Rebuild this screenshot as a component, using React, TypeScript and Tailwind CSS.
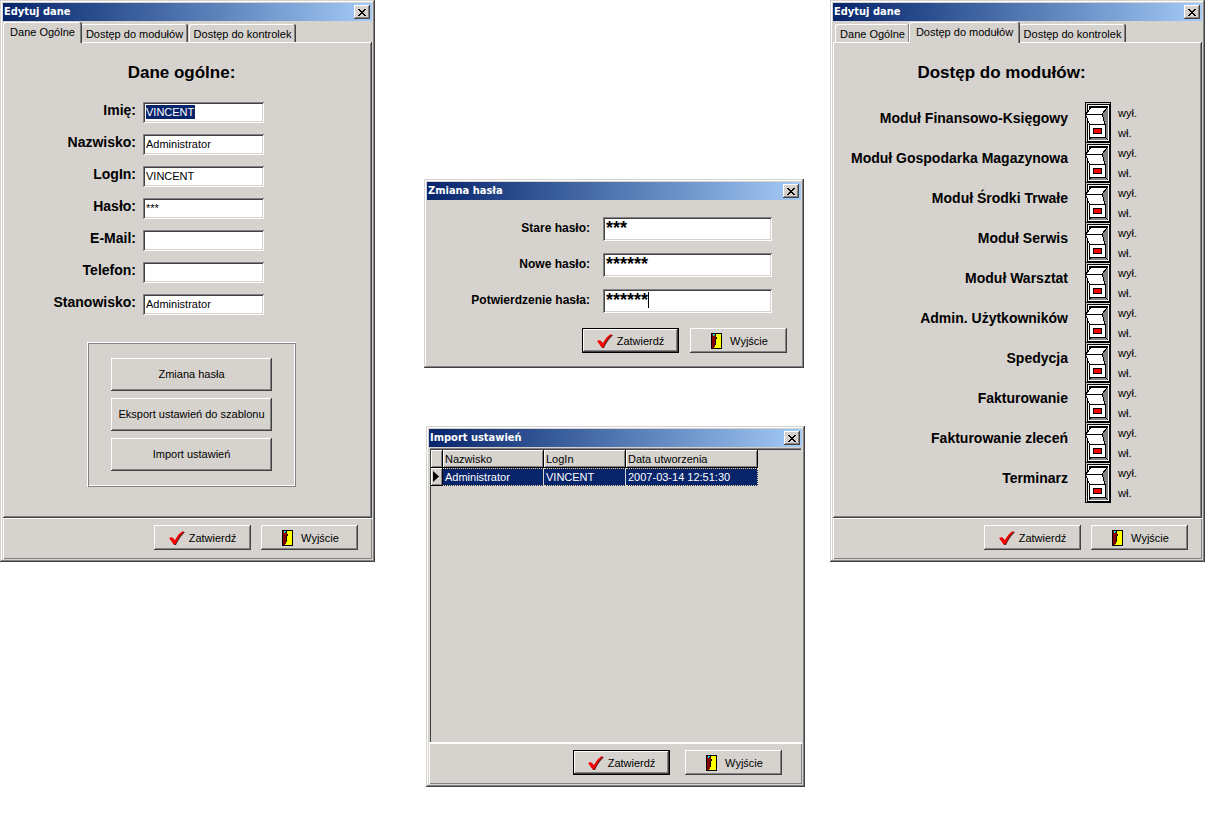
import { useState } from "react"
import type { ReactNode } from "react"
import { clsx } from "clsx"

const sunken =
    "shadow-[inset_1px_1px_#848284,inset_-1px_-1px_#fff,inset_2px_2px_#424142,inset_-2px_-2px_#d6d3ce]"
const raised = "shadow-[inset_-1px_-1px_#424142,inset_1px_1px_#fff,inset_-2px_-2px_#848284]"
const frame =
    "shadow-[inset_-1px_-1px_#424142,inset_1px_1px_#d6d3ce,inset_-2px_-2px_#848284,inset_2px_2px_#fff]"

const CheckIcon = () => (
    <svg width="16" height="14" viewBox="0 0 16 14" aria-hidden="true">
        <path d="M1 7.5 4 7l2.5 3L10 4l3.500-3H16L12 5.500 9 10l-2 4H5z" fill="#6b2020" />
        <path d="M0 7 3 6l2.500 3.500L9.500 3.500 13 .5 15 0 10.500 5 8 9.500 6.500 13H4.500z" fill="#f00" />
    </svg>
)

const DoorIcon = () => (
    <svg width="11" height="16" viewBox="0 0 11 16" shapeRendering="crispEdges" aria-hidden="true">
        <path d="M0 0h11v16H0z" fill="#000" />
        <path d="M1 1h9v14H1z" fill="#ff0" />
        <path d="M1 1h3v2h1v9H4v2H3v1H1z" fill="#840000" />
        <path d="M2 1h2v1H3v1H2z" fill="#0ff" />
        <path d="M4 1h1v2H4zM5 4h1v2H5zM4 6h1v6H4z" fill="#000" />
    </svg>
)

const SwitchIcon = () => (
    <svg width="26" height="41" viewBox="0 0 26 41" shapeRendering="crispEdges" aria-hidden="true">
        <path d="M0 0h26v41H0z" fill="#000" />
        <path d="M1 1h24v39H1z" fill="#d6d3ce" />
        <path d="M2 2h23v38H2z" fill="#000" />
        <path d="M3 3h21v36H3z" fill="#fff" />
        <path d="M4 4h19v34H4z" fill="#000" />
        <path d="M22 6 17 12l3 10v13l3 3V6zM5 38l1-2h14l2 2z" fill="#848284" />
        <path d="M5 6h17l-5 6 3 10v13H5V22L1 12z" fill="#fff" />
        <path d="M5.500 6.500.500 12.500l4 10v13M.500 12.500h17M22 6l-5 6 3 10v13M4.500 22.500h16M4.500 35.500h16" fill="none" stroke="#000" />
        <path d="M8 26h9v6H8z" fill="#000" />
        <path d="M9 27h7v4H9z" fill="#f00" />
    </svg>
)

type WindowProps = { title: string; className?: string; children: ReactNode }

const Window = ({ title, className, children }: WindowProps) => (
    <section className={clsx("flex flex-col bg-[#d6d3ce] p-[3px]", frame, className)}>
        <header className="flex h-[18px] items-center justify-between bg-linear-to-r from-[#08246b] to-[#a5cbf7] pr-[2px] pl-px">
            <h2 className="font-['DejaVu_Sans_Condensed',sans-serif] text-[11px] leading-[14px] font-bold text-white">
                {title}
            </h2>
            <button
                aria-label="Zamknij"
                className={clsx("flex h-[14px] w-4 items-center justify-center bg-[#d6d3ce]", raised)}
            >
                <svg width="8" height="7" viewBox="0 0 8 7" shapeRendering="crispEdges" aria-hidden="true">
                    <path
                        d="M0 0h2v1h1v1h2V1h1V0h2v1H7v1H6v1H5v1h1v1h1v1h1v1H6V6H5V5H3v1H2v1H0V6h1V5h1V4h1V3H2V2H1V1H0z"
                        fill="#000"
                    />
                </svg>
            </button>
        </header>
        {children}
    </section>
)

const Actions = ({ primary, className }: { primary?: boolean; className?: string }) => (
    <div className={clsx("flex justify-end", className)}>
        <button
            className={clsx(
                "flex h-[25px] w-[97px] items-center justify-center gap-1",
                raised,
                primary && "border border-black"
            )}
        >
            <CheckIcon />
            Zatwierdź
        </button>
        <button className={clsx("flex h-[25px] w-[97px] items-center justify-center gap-2 pl-[2px]", raised)}>
            <DoorIcon />
            Wyjście
        </button>
    </div>
)

const tabs = [
    { name: "Dane Ogólne", width: "w-[75px]", active: "w-[79px]" },
    { name: "Dostęp do modułów", width: "w-[107px]", active: "w-[111px]" },
    { name: "Dostęp do kontrolek", width: "w-[107px]", active: "w-[111px]" },
]

const EditWindow = ({ tab, children }: { tab: number; children: ReactNode }) => (
    <Window title="Edytuj dane">
        <div role="tablist" className="flex h-[21px] items-end gap-px pl-[2px]">
            {tabs.map((t, i) => (
                <button
                    key={t.name}
                    role="tab"
                    aria-selected={i === tab}
                    className={clsx(
                        "rounded-t-[2px] bg-[#d6d3ce] whitespace-nowrap shadow-[inset_-1px_0_#424142,inset_1px_1px_#fff,inset_-2px_0_#848284]",
                        i === tab ? "z-10 -mx-[2px] -mb-px h-[21px] pb-[2px]" : "h-[18px] pt-px",
                        i === tab ? t.active : t.width
                    )}
                >
                    {t.name}
                </button>
            ))}
        </div>
        <div className={clsx("h-[476px] pt-[21px]", raised)}>{children}</div>
        <div className="h-[41px] pt-[7px] pr-[14px] shadow-[inset_1px_1px_#fff,inset_-1px_-1px_#848284]">
            <Actions className="gap-[10px]" />
        </div>
    </Window>
)

const fields = [
    { id: "imie", label: "Imię:", value: "VINCENT", selected: true },
    { id: "nazwisko", label: "Nazwisko:", value: "Administrator" },
    { id: "login", label: "LogIn:", value: "VINCENT" },
    { id: "haslo", label: "Hasło:", value: "***" },
    { id: "email", label: "E-Mail:", value: "" },
    { id: "telefon", label: "Telefon:", value: "" },
    { id: "stanowisko", label: "Stanowisko:", value: "Administrator" },
]

const GeneralData = () => (
    <>
        <h3 className="mr-3 text-center text-[17px] leading-5 font-bold">Dane ogólne:</h3>
        <div className="mt-[19px] flex flex-col gap-[11px]">
            {fields.map((f) => (
                <div key={f.id} className="flex">
                    <label htmlFor={f.id} className="w-[133px] text-right text-[14px] leading-4 font-bold">
                        {f.label}
                    </label>
                    <div className={clsx("ml-[7px] flex h-[21px] w-[121px] bg-white p-[3px]", sunken)}>
                        <input
                            id={f.id}
                            defaultValue={f.value}
                            className={clsx(
                                "h-[14px] outline-none",
                                f.selected ? "w-[49px] bg-[#08246b] text-white" : "w-full bg-transparent"
                            )}
                        />
                    </div>
                </div>
            ))}
        </div>
        <div className="mt-[27px] ml-[84px] flex w-[209px] flex-col gap-[7px] py-4 pl-6 shadow-[inset_1px_1px_#fff,inset_-1px_-1px_#848284,inset_2px_2px_#848284,inset_-2px_-2px_#fff]">
            {["Zmiana hasła", "Eksport ustawień do szablonu", "Import ustawień"].map((name) => (
                <button key={name} className={clsx("h-[33px] w-[161px] pb-[2px]", raised)}>
                    {name}
                </button>
            ))}
        </div>
    </>
)

const modules = [
    "Moduł Finansowo-Księgowy",
    "Moduł Gospodarka Magazynowa",
    "Moduł Środki Trwałe",
    "Moduł Serwis",
    "Moduł Warsztat",
    "Admin. Użytkowników",
    "Spedycja",
    "Fakturowanie",
    "Fakturowanie zleceń",
    "Terminarz",
]

const ModuleAccess = () => (
    <>
        <h3 className="mr-8 text-center text-[17px] leading-5 font-bold">Dostęp do modułów:</h3>
        <div className="mt-[19px] flex flex-col">
            {modules.map((name, i) => (
                <div key={name} className="flex h-10">
                    <label
                        htmlFor={`modul-${i}`}
                        className="w-[235px] pt-2 text-right text-[14px] leading-4 font-bold whitespace-nowrap"
                    >
                        {name}
                    </label>
                    <div className="relative ml-[17px] h-[41px] w-[26px]">
                        <SwitchIcon />
                        <input
                            id={`modul-${i}`}
                            type="checkbox"
                            defaultChecked
                            className="absolute inset-0 opacity-0"
                        />
                    </div>
                    <div className="ml-[7px] flex flex-col gap-2 pt-[5px] leading-3">
                        <span>wył.</span>
                        <span>wł.</span>
                    </div>
                </div>
            ))}
        </div>
    </>
)

const PasswordWindow = () => {
    const [passwords, setPasswords] = useState(["***", "******", "******"])

    return (
        <Window title="Zmiana hasła" className="mr-px">
            <div className="flex flex-col gap-3 pt-[17px]">
                {["Stare hasło:", "Nowe hasło:", "Potwierdzenie hasła:"].map((label, i) => (
                    <div key={label} className="flex">
                        <label
                            htmlFor={`pass-${i}`}
                            className="w-[163px] pt-[3px] text-right text-[12px] leading-4 font-bold"
                        >
                            {label}
                        </label>
                        <div className={clsx("ml-[13px] flex h-6 w-[169px] bg-white p-[3px]", sunken)}>
                            <input
                                id={`pass-${i}`}
                                value={passwords[i]}
                                onChange={(e) => setPasswords((p) => p.map((v, n) => (n === i ? e.target.value : v)))}
                                className={clsx(
                                    "h-4 bg-transparent text-[18px] leading-4 font-bold outline-none",
                                    i === 2 ? "w-[42px]" : "w-full"
                                )}
                            />
                            {i === 2 && <span className="h-4 w-px bg-black" />}
                        </div>
                    </div>
                ))}
            </div>
            <Actions primary className="gap-[11px] pt-[15px] pr-[14px] pb-3" />
        </Window>
    )
}

const headCell =
    "border-r border-b border-black p-0 pl-[2px] font-normal shadow-[inset_1px_1px_#fff,inset_-1px_-1px_#848284]"
const rowCell = "border-y border-y-[#f7db94] bg-[#08246b] p-0 pl-[2px] text-white [border-block-style:dotted]"

const ImportWindow = () => (
    <Window title="Import ustawień" className="ml-[2px]">
        <div className="mx-px mt-px h-[294px] pt-[2px] pl-px shadow-[inset_0_1px_#848284,inset_1px_2px_#424142]">
            <table className="w-[327px] table-fixed border-separate border-spacing-0 text-left">
                <thead>
                    <tr className="h-[18px]">
                        <th className={clsx("w-3", headCell)} />
                        <th className={clsx("w-[101px]", headCell)}>Nazwisko</th>
                        <th className={clsx("w-[82px]", headCell)}>LogIn</th>
                        <th className={clsx("w-[132px]", headCell)}>Data utworzenia</th>
                    </tr>
                </thead>
                <tbody>
                    <tr className="h-[18px]">
                        <td className={headCell}>
                            <svg width="6" height="11" viewBox="0 0 6 11" aria-hidden="true">
                                <path d="M0 0v11l6-5.500z" fill="#000" />
                            </svg>
                        </td>
                        <td className={clsx("border-r border-r-[#d6d3ce]", rowCell)}>Administrator</td>
                        <td className={clsx("border-r border-r-[#d6d3ce]", rowCell)}>VINCENT</td>
                        <td className={clsx("border-r border-dotted border-r-[#f7db94]", rowCell)}>
                            2007-03-14 12:51:30
                        </td>
                    </tr>
                </tbody>
            </table>
        </div>
        <div className="h-[42px] pt-2 pr-5 shadow-[inset_1px_2px_#fff,inset_-1px_-1px_#848284]">
            <Actions primary className="gap-[15px]" />
        </div>
    </Window>
)

const App = () => (
    <main className="grid min-h-screen grid-cols-[375fr_405fr_375fr] items-start gap-x-[25px] bg-white pr-[25px] font-['Liberation_Sans',Arial,sans-serif] text-[11px] leading-[14px] text-black">
        <EditWindow tab={0}>
            <GeneralData />
        </EditWindow>
        <div className="flex flex-col gap-[58px] pt-[179px] pl-6">
            <PasswordWindow />
            <ImportWindow />
        </div>
        <EditWindow tab={1}>
            <ModuleAccess />
        </EditWindow>
    </main>
)

export default App
